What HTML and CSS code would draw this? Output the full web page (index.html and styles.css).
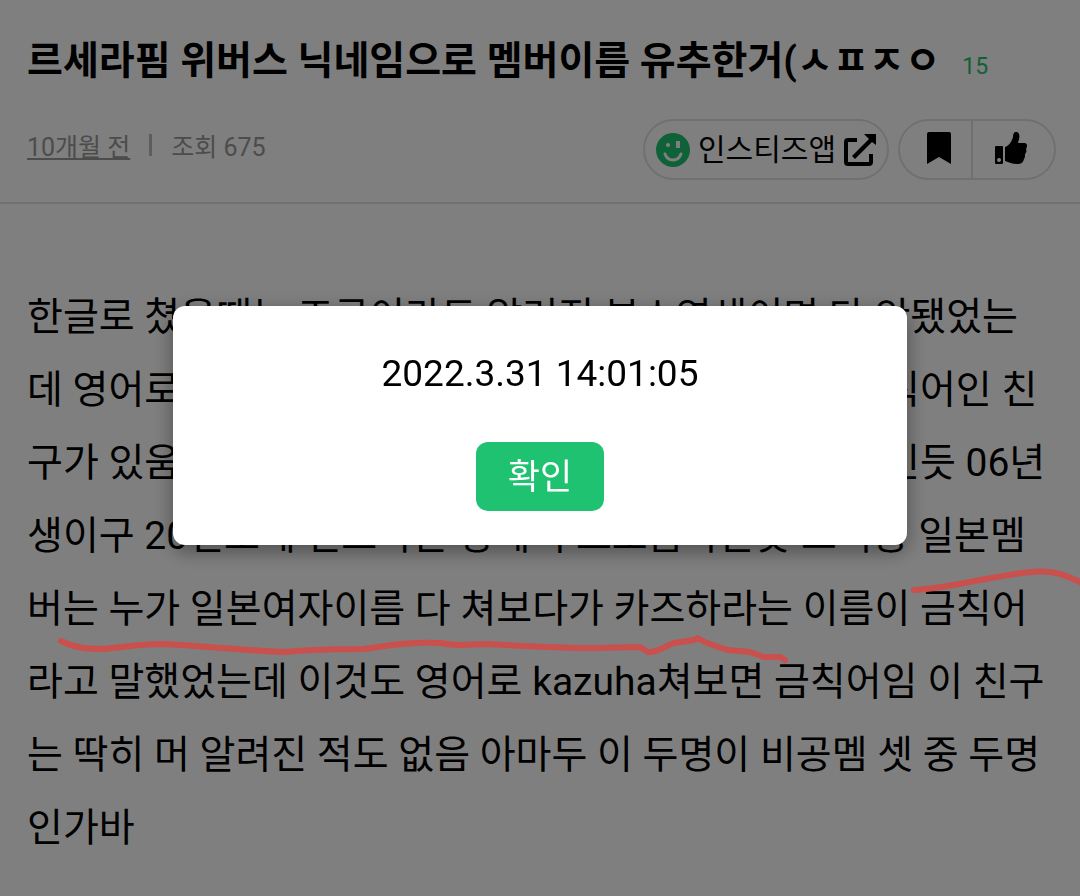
FILE: index.html
```html
<!DOCTYPE html>
<html lang="ko">
<head>
    <meta charset="UTF-8">
    <meta name="viewport" content="width=device-width, initial-scale=1.0">
    <title>르세라핌 위버스 닉네임으로 멤버이름 유추한거</title>
    <link rel="stylesheet" href="styles.css">
</head>
<body>
    <header class="post-header">
        <h1>르세라핌 위버스 닉네임으로 멤버이름 유추한거(ㅅㅍㅈㅇ <a href="#comments" class="comment-count">15</a></h1>
        <div class="meta">
            <div class="info">
                <a href="#date" class="date">10개월 전</a>
                <span class="divider"></span>
                <span>조회 675</span>
            </div>
            <div class="actions">
                <a href="#app" class="pill app-link">
                    <svg class="smile" viewBox="0 0 34 34">
                        <circle cx="17" cy="17" r="17" fill="#1fc270"/>
                        <circle cx="12" cy="12" r="2" fill="#fff"/>
                        <path d="M20 8h4v7h-4z" fill="#fff"/>
                        <path d="M9 21c3 8 13 8 16 0" fill="none" stroke="#fff" stroke-width="3" stroke-linecap="round"/>
                    </svg>
                    <span class="app-name">인스티즈앱</span>
                    <svg class="external" viewBox="0 0 32 32">
                        <path d="M13 6H4q-2 0-2 2v20q0 2 2 2h21q2 0 2-2v-8" fill="none" stroke="#000" stroke-width="4"/>
                        <path d="M20 0h12v11l-4-3-17 17-3-3L25 5z"/>
                    </svg>
                </a>
                <div class="pill button-group">
                    <button type="button" class="icon-btn" aria-label="스크랩">
                        <svg class="bookmark" viewBox="0 0 24 32"><path d="M2 0h20q2 0 2 2v30l-12-7-12 7V2q0-2 2-2z"/></svg>
                    </button>
                    <button type="button" class="icon-btn" aria-label="추천">
                        <svg class="thumb" viewBox="0 0 32 32">
                            <path fill-rule="evenodd" d="M1 14h6q1 0 1 1v16q0 1-1 1H1q-1 0-1-1V15q0-1 1-1zm3 12a2 2 0 1 0 .1 0z"/>
                            <path d="M10 15c4-1 7-6 8-10 0-4 2-6 4-5 4 2 2 7 1 11h7c3 1 2 4 1 6 1 2 0 4-1 5 0 2 0 4-1 5-1 4-3 5-7 5-5 0-8-2-12-3z"/>
                        </svg>
                    </button>
                </div>
            </div>
        </div>
    </header>

    <main class="post-body">
        <p>
            한글로 쳤을때는 조금이라도 알려진 부스영생이면 다 안됐었는<br>
            데 영어로 쳤을때 사쿠라 김채원 말고도 홍은채라고 금칙어인 친<br>
            구가 있움 이름은 홍은채 같은데 이친구가 제일 어린거인듯 06년<br>
            생이구 20년도에 인스타는 방에서 프로듬하는듯 그리궁 일본멤<br>
            버는 누가 일본여자이름 다 쳐보다가 카즈하라는 이름이 금칙어<br>
            라고 말했었는데 이것도 영어로 kazuha쳐보면 금칙어임 이 친구<br>
            는 딱히 머 알려진 적도 없음 아마두 이 두명이 비공멤 셋 중 두명<br>
            인가바
        </p>
    </main>

    <div class="overlay">
        <div class="dialog" role="dialog" aria-modal="true">
            <p class="dialog-text">2022.3.31 14:01:05</p>
            <button type="button" class="confirm-btn">확인</button>
        </div>
    </div>

    <svg class="pen-marks" viewBox="0 0 1080 120">
        <path d="M61 81c12 6 22 8 42 8 24-2 33-5 61-5 38 2 76 6 122 8 18-2 35-3 78-3 28-4 40-7 76-6 16 3 26 2 48 1 34 2 68 4 108 4l44-1 8 5c10 1 14-5 26-9l20-3 4-2c5 4 20 9 30 12l22 2 14 5 16 0 5 3"/>
        <path d="M914 30c34-2 52-8 77-12 25-4 45-9 65-5q10 2 28 11"/>
    </svg>
</body>
</html>
```

FILE: styles.css
```css
* {
    margin: 0;
    padding: 0;
    box-sizing: border-box;
}

body {
    background: #fff;
    color: #000;
    font-family: Roboto, "Noto Sans CJK KR", sans-serif;
}

a {
    color: inherit;
    text-decoration: none;
}

button {
    border: none;
    background: none;
    font-family: inherit;
    cursor: pointer;
}

.post-header {
    padding: 33px 24px 22px 27px;
    border-bottom: 2px solid #e0e0e0;
}

.post-header h1 {
    font-size: 39px;
    line-height: 56px;
    white-space: nowrap;
}

.comment-count {
    margin-left: 12px;
    color: #1fc270;
    font-size: 23px;
    font-weight: 400;
}

.meta {
    display: flex;
    justify-content: space-between;
    align-items: flex-start;
    margin-top: 24px;
}

.info {
    display: flex;
    align-items: center;
    gap: 19px;
    height: 52px;
    color: #999;
    font-size: 25px;
}

.date {
    text-decoration: underline;
}

.divider {
    width: 3px;
    height: 22px;
    background: #bbb;
}

.actions {
    display: flex;
    gap: 9px;
}

.pill {
    display: flex;
    align-items: center;
    height: 61px;
    border: 2px solid #e0e0e0;
    border-radius: 31px;
}

.app-link {
    gap: 8px;
    padding: 0 11px;
    font-size: 30px;
}

.app-name {
    padding-bottom: 6px;
}

.smile {
    width: 34px;
    height: 34px;
}

.external {
    width: 32px;
    height: 32px;
}

.icon-btn {
    display: flex;
    align-items: center;
    justify-content: center;
    width: 81px;
    height: 100%;
    padding: 0 6px 3px 0;
}

.icon-btn:first-child {
    width: 73px;
    padding: 0 0 3px 6px;
    border-right: 2px solid #e0e0e0;
}

.bookmark {
    width: 24px;
    height: 32px;
}

.thumb {
    width: 32px;
    height: 32px;
}

.post-body {
    padding: 77px 24px 32px 27px;
    font-size: 39px;
    line-height: 73px;
    white-space: nowrap;
    overflow: hidden;
}

.overlay {
    position: fixed;
    inset: 0;
    display: flex;
    align-items: center;
    justify-content: center;
    padding-bottom: 45px;
    background: rgba(0, 0, 0, 0.5);
}

.dialog {
    display: flex;
    flex-direction: column;
    align-items: center;
    gap: 40px;
    width: 68%;
    padding: 40px 32px 34px;
    border-radius: 12px;
    background: #fff;
    box-shadow: 0 6px 20px rgba(0, 0, 0, 0.4);
}

.dialog-text {
    font-size: 37px;
    line-height: 56px;
}

.confirm-btn {
    height: 69px;
    padding: 0 32px 6px;
    border-radius: 12px;
    background: #1fc270;
    color: #fff;
    font-size: 35px;
}

.pen-marks {
    position: absolute;
    top: 560px;
    left: 0;
    width: 100%;
    fill: none;
    stroke: #c9504d;
    stroke-width: 6;
    stroke-linecap: round;
    stroke-linejoin: round;
    pointer-events: none;
}
```
